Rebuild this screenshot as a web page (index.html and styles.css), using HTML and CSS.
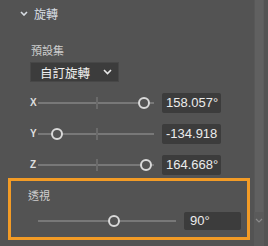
FILE: index.html
```html
<!DOCTYPE html>
<html>
<head>
  <link rel="stylesheet" href="styles.css">
</head>
<body>
  <div class="panel">
    <div class="content">
      <div class="section-header">
        <svg class="chevron" width="8" height="5" viewBox="0 0 8 5"><path d="M1 1 L4 4 L7 1" fill="none" stroke="#d8dde3" stroke-width="1.6"/></svg>
        <span>旋轉</span>
      </div>

      <div class="preset">
        <div class="field-label">預設集</div>
        <div class="dropdown">
          <span>自訂旋轉</span>
          <svg width="9" height="6" viewBox="0 0 9 6"><path d="M1 1 L4.5 4.5 L8 1" fill="none" stroke="#e8e8e8" stroke-width="1.6"/></svg>
        </div>
      </div>

      <!-- axis sliders -->
      <div class="axes">
        <div class="slider-row">
          <span class="axis">X</span>
          <div class="track"><i class="tick"></i><b class="thumb" style="left: 91%"></b></div>
          <div class="value">158.057°</div>
        </div>
        <div class="slider-row">
          <span class="axis">Y</span>
          <div class="track"><i class="tick"></i><b class="thumb" style="left: 16%"></b></div>
          <div class="value">-134.918</div>
        </div>
        <div class="slider-row">
          <span class="axis">Z</span>
          <div class="track"><i class="tick"></i><b class="thumb" style="left: 93%"></b></div>
          <div class="value">164.668°</div>
        </div>
      </div>

      <div class="perspective">
        <div class="field-label">透視</div>
        <div class="slider-row">
          <div class="track"><b class="thumb" style="left: 55%"></b></div>
          <div class="value">90°</div>
        </div>
      </div>
    </div>

    <div class="scrollbar">
      <div class="scroll-thumb"></div>
      <svg class="scroll-arrow" width="8" height="5" viewBox="0 0 8 5"><path d="M1 1 L4 4 L7 1" fill="none" stroke="#8a8a8a" stroke-width="1.2"/></svg>
      <div class="scroll-end"></div>
    </div>
  </div>
</body>
</html>
```

FILE: styles.css
```css
body {
  margin: 0;
  background: #535353;
  font-family: "Noto Sans CJK TC", "Liberation Sans", sans-serif;
  color: #d4d4d4;
}

.panel {
  display: flex;
  width: 268px;
  height: 246px;
  overflow: hidden;
}

.content {
  width: 254px;
  flex: none;
}

.section-header {
  display: flex;
  align-items: center;
  gap: 6px;
  height: 18px;
  margin-top: 4px;
  padding-left: 20px;
  font-size: 12px;
  color: #d8dde3;
}

.preset {
  margin-top: 21px;
  padding-left: 31px;
}

.field-label {
  font-size: 11px;
  line-height: 14px;
  color: #cfcfcf;
}

.dropdown {
  display: flex;
  align-items: center;
  justify-content: space-between;
  box-sizing: border-box;
  width: 89px;
  height: 20px;
  margin-top: 5px;
  margin-left: -1px;
  padding: 0 6px 0 9px;
  background: #3c3c3c;
  border: 1px solid #474747;
  font-size: 12.5px;
  color: #f0f0f0;
}

.axes {
  margin-top: 5px;
}

.slider-row {
  display: flex;
  align-items: center;
  height: 31px;
  padding-left: 30px;
}

.axis {
  width: 8px;
  font-family: "Liberation Sans", sans-serif;
  font-weight: bold;
  font-size: 10px;
  color: #dedede;
}

.track {
  position: relative;
  width: 116px;
  height: 2px;
  background: #787878;
}

.tick {
  position: absolute;
  left: 58px;
  top: -5px;
  width: 2px;
  height: 12px;
  background: #6a6a6a;
}

.thumb {
  position: absolute;
  top: 1px;
  width: 8px;
  height: 8px;
  margin: -6px 0 0 -6px;
  border: 2px solid #d9d9d9;
  border-radius: 50%;
  background: #535353;
}

.value {
  box-sizing: border-box;
  width: 59px;
  height: 20px;
  margin-left: 8px;
  padding-left: 4px;
  background: #3c3c3c;
  border-radius: 2px;
  font-family: "Liberation Sans", sans-serif;
  font-size: 13px;
  line-height: 20px;
  color: #ececec;
}

.perspective {
  box-sizing: border-box;
  width: 242px;
  height: 62px;
  margin: -2px 0 0 8px;
  padding: 7px 0 0 17px;
  border: 3px solid #f29b26;
}

.perspective .slider-row {
  height: 26px;
  margin-top: 6px;
  padding-left: 10px;
}

.perspective .track {
  width: 138px;
}

.perspective .value {
  width: 57px;
  height: 18px;
  line-height: 18px;
  padding-left: 6px;
}

.scrollbar {
  display: flex;
  flex-direction: column;
  align-items: center;
  width: 10px;
  flex: none;
  background: #5a5a5a;
}

.scroll-thumb {
  width: 8px;
  height: 212px;
  background: #606060;
  border-left: 1px solid #585858;
  border-right: 1px solid #5c5c5c;
}

.scroll-arrow {
  margin-top: 6px;
}

.scroll-end {
  flex: 1;
}
```
